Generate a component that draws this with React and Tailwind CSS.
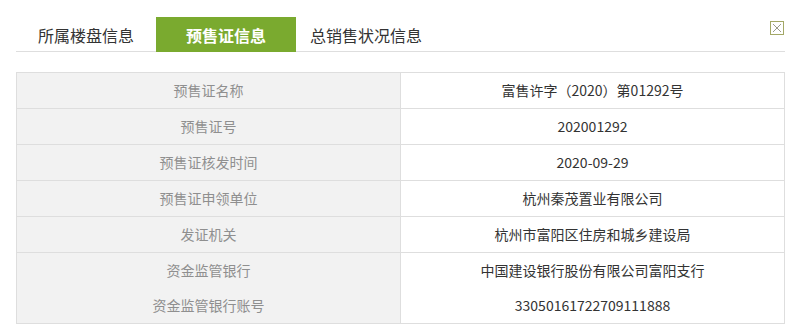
import React from 'react';

const rows = [
  ['预售证名称', '富售许字（2020）第01292号'],
  ['预售证号', '202001292'],
  ['预售证核发时间', '2020-09-29'],
  ['预售证申领单位', '杭州秦茂置业有限公司'],
  ['发证机关', '杭州市富阳区住房和城乡建设局'],
];

const App = () => {
  return (
    <div
      className="w-[798px] h-[332px] bg-white overflow-hidden"
      style={{ fontFamily: '"Noto Sans CJK SC", "Liberation Sans", sans-serif' }}
    >
      <div className="relative mx-[16px] w-[769px] pt-[17px]">
        <div className="flex border-b border-[#dedede] h-[35px]">
          <div className="h-[35px] pl-[22px] pr-[22px] -mb-px text-[#333] text-[16px] flex items-center">
            所属楼盘信息
          </div>
          <div className="w-[140px] h-[35px] -mb-px bg-[#7aaa2f] text-white font-bold text-[16px] flex items-center justify-center">
            预售证信息
          </div>
          <div className="h-[35px] pl-[14px] -mb-px text-[#333] text-[16px] flex items-center">
            总销售状况信息
          </div>
        </div>
        <div className="absolute right-[1px] top-[21px] w-[14px] h-[14px] border border-[#a3a866] flex items-center justify-center">
          <svg width="10" height="10" viewBox="0 0 10 10">
            <path d="M1 1L9 9M9 1L1 9" stroke="#9a9a8a" strokeWidth="1" />
          </svg>
        </div>

        <div className="mt-[20px] border border-[#dedede] text-[14px]">
          {rows.map(([k, v]) => (
            <div key={k} className="flex h-[36px] border-b border-[#dedede]">
              <div className="w-[384px] bg-[#f2f2f2] border-r border-[#dedede] text-[#8f8f8f] flex items-center justify-center">
                {k}
              </div>
              <div className="flex-1 text-[#333] flex items-center justify-center">{v}</div>
            </div>
          ))}
          <div className="flex h-[70px]">
            <div className="w-[384px] bg-[#f2f2f2] border-r border-[#dedede] text-[#8f8f8f] flex flex-col">
              <div className="h-[35px] flex items-center justify-center">资金监管银行</div>
              <div className="h-[35px] flex items-center justify-center">资金监管银行账号</div>
            </div>
            <div className="flex-1 text-[#333] flex flex-col">
              <div className="h-[35px] flex items-center justify-center">中国建设银行股份有限公司富阳支行</div>
              <div className="h-[35px] flex items-center justify-center">33050161722709111888</div>
            </div>
          </div>
        </div>
      </div>
    </div>
  );
};

export default App;
